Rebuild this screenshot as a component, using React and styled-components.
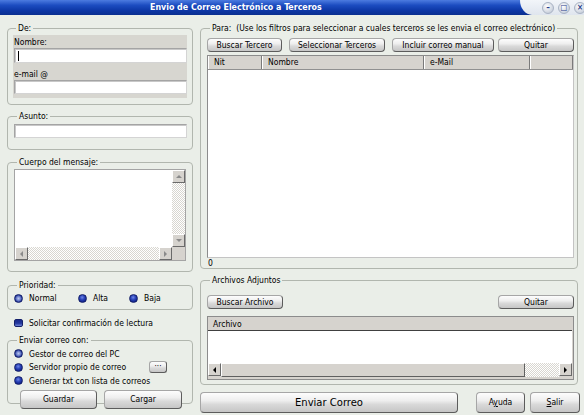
import React from "react";
import styled, { createGlobalStyle } from "styled-components";

const FONT = `"DejaVu Sans Condensed", "Liberation Sans", sans-serif`;
const FS = 8.5;

const GlobalStyle = createGlobalStyle`
  html, body { margin: 0; padding: 0; background: #eaeee8; }
  body { font-family: ${FONT}; font-size: ${FS}px; color: #000; }
  * { box-sizing: border-box; }
`;

const Window = styled.div`
  width: 584px;
  height: 415px;
  overflow: hidden;
  background: #eaeee8;
  display: flex;
  flex-direction: column;
`;

const TitleBar = styled.div`
  height: 15px;
  display: flex;
  align-items: center;
  background: linear-gradient(#4c7be0, #1c4cc0 35%, #0d37a6 70%, #0a2f90);
`;

const TitleText = styled.div`
  flex: 1;
  padding-left: 150px;
  color: #fff;
  font-weight: bold;
  font-size: 8.8px;
  line-height: 15px;
`;

const TitleCaps = styled.div`
  width: 64px;
  height: 15px;
  display: flex;
  align-items: center;
  gap: 4px;
  padding-left: 22px;
  background: linear-gradient(#f2f5f9, #dfe5ee);
  border-bottom-left-radius: 12px 15px;
`;

const CapBtn = styled.div`
  width: 12px;
  height: 12px;
  flex: none;
  border-radius: 50%;
  background: radial-gradient(circle at 40% 35%, #ffffff, #c9d0dc 75%);
  border: 1px solid #a9b3c4;
  display: flex;
  align-items: center;
  justify-content: center;
  color: #2a3f8a;
  font-size: 8px;
  font-weight: bold;
  line-height: 1;
`;

const Body = styled.div`
  flex: 1;
  display: flex;
`;

const LeftCol = styled.div`
  width: 186px;
  margin-left: 7px;
  padding-top: 7px;
  display: flex;
  flex-direction: column;
`;

const RightCol = styled.div`
  width: 378px;
  margin-left: 7px;
  padding-top: 7px;
  display: flex;
  flex-direction: column;
`;

const Group = styled.fieldset`
  margin: ${(p) => p.$mt || 0}px 0 0 0;
  padding: ${(p) => p.$pad};
  border: 1px solid #b1b6ae;
  border-radius: 4px;
  min-width: 0;
`;

const Legend = styled.legend`
  padding: 0 2px;
  margin-left: 3px;
  font-size: ${FS}px;
  line-height: 12px;
`;

const GrayPanel = styled.div`
  background: #d7d6d0;
  padding: 1px 0 4px 1px;
`;

const FieldLabel = styled.div`
  font-size: ${FS}px;
  line-height: 12px;
  margin-top: ${(p) => p.$mt || 0}px;
`;

const TextBox = styled.div`
  height: ${(p) => p.$h || 15}px;
  background: #fff;
  border: 1px solid #a4a4a4;
  border-right-color: #d4d4d4;
  border-bottom-color: #d4d4d4;
  box-shadow: inset 1px 1px 0 #c8c8c8;
  position: relative;
`;

const Caret = styled.span`
  position: absolute;
  left: 3px;
  top: 2px;
  width: 1px;
  height: 10px;
  background: #000;
`;

const Memo = styled.div`
  height: 92px;
  background: #fff;
  border: 1px solid #a4a4a4;
  display: grid;
  grid-template-columns: 1fr 13px;
  grid-template-rows: 1fr 13px;
`;

const VScroll = styled.div`
  display: flex;
  flex-direction: column;
`;

const HScroll = styled.div`
  display: flex;
  height: ${(p) => p.$h || 13}px;
`;

const Track = styled.div`
  flex: 1;
  background: repeating-conic-gradient(#d8d6d0 0 25%, #ffffff 0 50%) 0 0 / 2px 2px;
`;

const Thumb = styled.div`
  width: ${(p) => p.$w}px;
  background: #d6d3ce;
  border: 1px solid #fff;
  border-right-color: #606060;
  border-bottom-color: #606060;
`;

const ScrollBtn = styled.div`
  width: 13px;
  height: 13px;
  flex: none;
  background: #d6d3ce;
  border: 1px solid #fff;
  border-right-color: #6a6a6a;
  border-bottom-color: #6a6a6a;
  display: flex;
  align-items: center;
  justify-content: center;
`;

const Arrow = styled.span`
  width: 0;
  height: 0;
  border: 3px solid transparent;
  ${(p) =>
    p.$dir === "up"
      ? `border-bottom-color: ${p.$c}; border-top-width: 0;`
      : p.$dir === "down"
      ? `border-top-color: ${p.$c}; border-bottom-width: 0;`
      : p.$dir === "left"
      ? `border-right-color: ${p.$c}; border-left-width: 0;`
      : `border-left-color: ${p.$c}; border-right-width: 0;`}
`;

const Corner = styled.div`
  background: #d6d3ce;
`;

const OptionRow = styled.div`
  display: flex;
  align-items: center;
  height: ${(p) => p.$h || 14}px;
  margin-top: ${(p) => p.$mt || 0}px;
  padding-left: ${(p) => p.$pl || 0}px;
`;

const Option = styled.label`
  display: flex;
  align-items: center;
  gap: 6px;
  width: ${(p) => (p.$w ? `${p.$w}px` : "auto")};
  font-size: ${FS}px;
`;

const Radio = styled.span`
  width: 9px;
  height: 9px;
  flex: none;
  border-radius: 50%;
  border: 1px solid #14206a;
  background: ${(p) =>
    p.$on
      ? "radial-gradient(circle at 50% 50%, #b7c3ea 0, #7d90d6 35%, #1c2f94 75%)"
      : "radial-gradient(circle at 45% 35%, #6f86e6 0, #2a43b8 40%, #0e1e86 80%)"};
`;

const Check = styled.span`
  width: 9px;
  height: 8px;
  flex: none;
  border-radius: 2px;
  border: 1px solid #14206a;
  background: linear-gradient(#1a2a8e, #24389e 55%, #6f84d8);
`;

const Btn = styled.button`
  width: ${(p) => p.$w}px;
  height: ${(p) => p.$h || 14}px;
  margin-left: ${(p) => p.$ml || 0}px;
  flex: none;
  padding: 0;
  font-family: ${(p) => (p.$big ? `"DejaVu Sans", Verdana, sans-serif` : FONT)};
  font-size: ${(p) => (p.$big ? 10 : FS)}px;
  line-height: 1;
  white-space: nowrap;
  color: #000;
  background: linear-gradient(#fdfdfd, #eeeeee 40%, #d9d9d9 60%, #c6c6c6);
  border: 1px solid #a6a6a6;
  border-right-color: #5c5c5c;
  border-bottom-color: #5c5c5c;
  border-radius: 4px;
`;

const DotsBtn = styled(Btn)`
  margin-left: auto;
  margin-right: 25px;
  font-size: 8px;
  border-radius: 3px;
`;

const FooterBtns = styled.div`
  display: flex;
  justify-content: space-between;
  margin: 2px 10px -6px 6px;
`;

const BtnRow = styled.div`
  display: flex;
  align-items: center;
`;

const Grid = styled.div`
  height: 203px;
  margin-top: 3px;
  background: #fff;
  border: 1px solid #8c8c8c;
  border-right-color: #c4c4c4;
  border-bottom-color: #c4c4c4;
`;

const GridHead = styled.div`
  display: flex;
  height: 14px;
  background: #d6d3ce;
  border-bottom: 1px solid #909090;
`;

const HeadCell = styled.div`
  width: ${(p) => (p.$w ? `${p.$w}px` : "auto")};
  flex: ${(p) => (p.$w ? "none" : 1)};
  padding-left: 5px;
  font-size: ${FS}px;
  line-height: 13px;
  border-left: 1px solid #fff;
  border-right: 1px solid #7a7a7a;
`;

const Count = styled.div`
  height: 10px;
  font-size: ${FS}px;
  line-height: 10px;
  padding-left: 1px;
`;

const List = styled.div`
  height: 64px;
  margin-top: 7px;
  display: flex;
  flex-direction: column;
  background: #d6d3ce;
  border: 1px solid #8c8c8c;
  padding: 0 1px 2px 0;
`;

const ListHead = styled.div`
  height: 14px;
  padding-left: 5px;
  font-size: ${FS}px;
  line-height: 14px;
  border-bottom: 1px solid #404040;
`;

const ListBody = styled.div`
  flex: 1;
  background: #fff;
`;

const BottomRow = styled.div`
  display: flex;
  margin-top: 7px;
  margin-right: -2px;
`;

const U = styled.span`
  text-decoration: underline;
`;

export default function App() {
  return (
    <>
      <GlobalStyle />
      <Window>
        <TitleBar>
          <TitleText>Envio de Correo Electrónico a Terceros</TitleText>
          <TitleCaps>
            <CapBtn>–</CapBtn>
            <CapBtn>□</CapBtn>
            <CapBtn>×</CapBtn>
          </TitleCaps>
        </TitleBar>
        <Body>
          <LeftCol>
            <Group $pad="1px 5px 6px 5px">
              <Legend>De:</Legend>
              <GrayPanel>
                <FieldLabel>Nombre:</FieldLabel>
                <TextBox>
                  <Caret />
                </TextBox>
                <FieldLabel $mt={5}>e-mail @</FieldLabel>
                <TextBox $h={14} />
              </GrayPanel>
            </Group>
            <Group $mt={5} $pad="2px 5px 11px 6px">
              <Legend>Asunto:</Legend>
              <TextBox $h={14} />
            </Group>
            <Group $mt={6} $pad="1px 6px 10px 6px">
              <Legend>Cuerpo del mensaje:</Legend>
              <Memo>
                <div />
                <VScroll>
                  <ScrollBtn>
                    <Arrow $dir="up" $c="#8a8a8a" />
                  </ScrollBtn>
                  <Track />
                  <ScrollBtn>
                    <Arrow $dir="down" $c="#8a8a8a" />
                  </ScrollBtn>
                </VScroll>
                <HScroll>
                  <ScrollBtn>
                    <Arrow $dir="left" $c="#8a8a8a" />
                  </ScrollBtn>
                  <Track />
                  <ScrollBtn>
                    <Arrow $dir="right" $c="#8a8a8a" />
                  </ScrollBtn>
                </HScroll>
                <Corner />
              </Memo>
            </Group>
            <Group $mt={7} $pad="0 5px 4px 6px">
              <Legend>Prioridad:</Legend>
              <OptionRow>
                <Option $w={64}>
                  <Radio $on />
                  Normal
                </Option>
                <Option $w={51}>
                  <Radio />
                  Alta
                </Option>
                <Option>
                  <Radio />
                  Baja
                </Option>
              </OptionRow>
            </Group>
            <OptionRow $mt={6} $pl={7}>
              <Option>
                <Check />
                Solicitar confirmación de lectura
              </Option>
            </OptionRow>
            <Group $mt={4} $pad="1px 0 0 6px">
              <Legend>Enviar correo con:</Legend>
              <OptionRow $h={13.5}>
                <Option>
                  <Radio $on />
                  Gestor de correo del PC
                </Option>
              </OptionRow>
              <OptionRow $h={13.5}>
                <Option>
                  <Radio />
                  Servidor propio de correo
                </Option>
                <DotsBtn $w={18} $h={12}>
                  ···
                </DotsBtn>
              </OptionRow>
              <OptionRow $h={13.5}>
                <Option>
                  <Radio />
                  Generar txt con lista de correos
                </Option>
              </OptionRow>
              <FooterBtns>
                <Btn $w={77} $h={19}>
                  Guardar
                </Btn>
                <Btn $w={78} $h={19}>
                  Cargar
                </Btn>
              </FooterBtns>
            </Group>
          </LeftCol>
          <RightCol>
            <Group $pad="4px 3px 0 6px">
              <Legend>
                Para:&nbsp;&nbsp;(Use los filtros para seleccionar a cuales terceros se les envia el correo electrónico)
              </Legend>
              <BtnRow>
                <Btn $w={75}>Buscar Tercero</Btn>
                <Btn $w={96} $ml={7}>
                  Seleccionar Terceros
                </Btn>
                <Btn $w={102} $ml={7}>
                  Incluir correo manual
                </Btn>
                <Btn $w={76} $ml={4}>
                  Quitar
                </Btn>
              </BtnRow>
              <Grid>
                <GridHead>
                  <HeadCell $w={54}>Nit</HeadCell>
                  <HeadCell $w={162}>Nombre</HeadCell>
                  <HeadCell $w={106}>e-Mail</HeadCell>
                  <HeadCell />
                </GridHead>
              </Grid>
              <Count>0</Count>
            </Group>
            <Group $mt={5} $pad="9px 3px 4px 6px">
              <Legend>Archivos Adjuntos</Legend>
              <BtnRow>
                <Btn $w={76}>Buscar Archivo</Btn>
                <Btn $w={76} $ml={215}>
                  Quitar
                </Btn>
              </BtnRow>
              <List>
                <ListHead>Archivo</ListHead>
                <ListBody />
                <HScroll $h={14}>
                  <ScrollBtn>
                    <Arrow $dir="left" $c="#000" />
                  </ScrollBtn>
                  <Thumb $w={304} />
                  <Track />
                  <ScrollBtn>
                    <Arrow $dir="right" $c="#000" />
                  </ScrollBtn>
                </HScroll>
              </List>
            </Group>
            <BottomRow>
              <Btn $w={258} $h={21} $big>
                Enviar Correo
              </Btn>
              <Btn $w={49} $h={21} $ml={18}>
                A<U>y</U>uda
              </Btn>
              <Btn $w={50} $h={21} $ml={5}>
                <U>S</U>alir
              </Btn>
            </BottomRow>
          </RightCol>
        </Body>
      </Window>
    </>
  );
}
